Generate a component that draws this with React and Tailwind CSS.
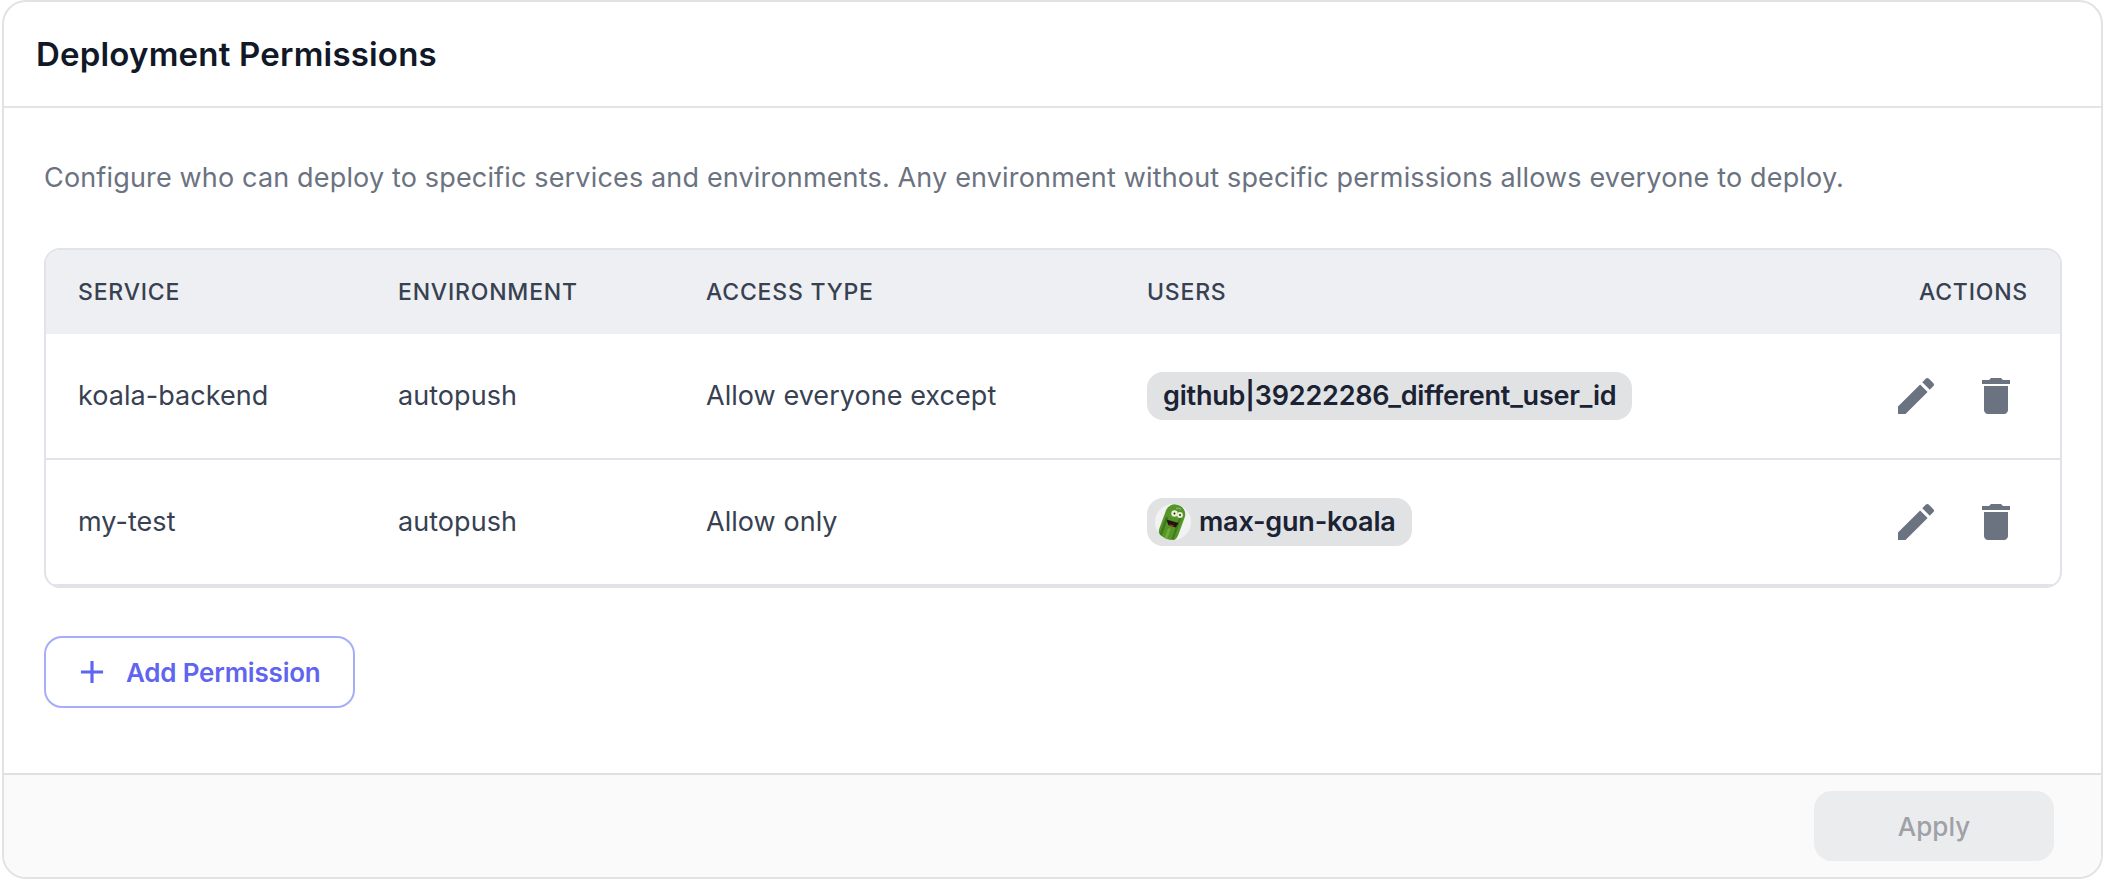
import React from "react";

const EditIcon = () => (
  <svg viewBox="0 0 24 24" className="w-12 h-12 fill-[#6b7280] shrink-0">
    <path d="M3 17.25V21h3.75L17.81 9.94l-3.75-3.75L3 17.25zM20.71 7.04c.39-.39.39-1.02 0-1.41l-2.34-2.34c-.39-.39-1.02-.39-1.41 0l-1.83 1.83 3.75 3.75 1.83-1.83z" />
  </svg>
);
const DeleteIcon = () => (
  <svg viewBox="0 0 24 24" className="w-12 h-12 fill-[#6b7280] shrink-0">
    <path d="M6 19c0 1.1.9 2 2 2h8c1.1 0 2-.9 2-2V7H6v12zM19 4h-3.5l-1-1h-5l-1 1H5v2h14V4z" />
  </svg>
);
const Pickle = () => (
  <svg viewBox="0 0 36 36" className="w-9 h-9 shrink-0">
    <defs>
      <clipPath id="av">
        <circle cx="18" cy="18" r="18" />
      </clipPath>
    </defs>
    <circle cx="18" cy="18" r="18" fill="#f2f2f2" />
    <g clipPath="url(#av)">
      <g transform="rotate(20 17 19)">
        <rect x="7" y="0" width="20" height="38" rx="9.5" fill="#55952a" />
        <path d="M10.5 15v22" stroke="#3f7a1a" strokeWidth="2.4" fill="none" />
        <path d="M23 6v28" stroke="#3f7a1a" strokeWidth="2" fill="none" />
        <path d="M16.5 25v11" stroke="#6fae35" strokeWidth="2.6" fill="none" />
      </g>
      <circle cx="19.5" cy="9.5" r="3.2" fill="#e8f2cf" />
      <circle cx="25" cy="11" r="2.9" fill="#e8f2cf" />
      <circle cx="19.5" cy="9.5" r=".9" fill="#1a1a1a" />
      <circle cx="25" cy="11" r=".9" fill="#1a1a1a" />
      <path d="M21 4.5c2-.8 4-.2 5 1.2" stroke="#9fb8a8" strokeWidth="1" fill="none" />
      <path d="M11.5 15.5l12 3.5-2.8 4.6-7.4-2.6z" fill="#1d1512" />
      <path d="M14.5 20l4.6 1.4-.9 1.4-3.4-1.1z" fill="#a3262a" />
    </g>
  </svg>
);

const cols = "grid grid-cols-[320px_308px_441px_1fr] items-center";

const rows = [
  { service: "koala-backend", access: "Allow everyone except", user: "github|39222286_different_user_id" },
  { service: "my-test", access: "Allow only", user: "max-gun-koala", avatar: true },
];

export default function App() {
  return (
    <div className="font-['Inter','Liberation_Sans',sans-serif] bg-white">
      <div className="ml-[2px] w-[2101px] h-[879px] flex flex-col border-2 border-[#e2e2e2] rounded-[24px] overflow-hidden bg-white">
        <div className="h-[104px] shrink-0 border-b-2 border-[#e4e4e6] box-content flex items-center pl-8 pt-[2px] -mt-[2px]">
          <h1 className="text-[33px] leading-10 font-semibold tracking-[0.2px] text-[#111827]">Deployment Permissions</h1>
        </div>
        <div className="flex-1 pl-10 pr-[39px] pt-[50px]">
          <p className="text-[27px] leading-10 text-[#6b7280] tracking-[0.16px]">
            Configure who can deploy to specific services and environments. Any environment without specific permissions allows everyone to deploy.
          </p>
          <div className="mt-[50px] border-2 border-[#e2e3e8] rounded-2xl overflow-hidden">
            <div className={`${cols} h-[84px] bg-[#eeeff2] pl-8 pr-8 text-[23px] font-medium tracking-[0.8px] text-[#374151]`}>
              <div>SERVICE</div>
              <div>ENVIRONMENT</div>
              <div>ACCESS TYPE</div>
              <div className="flex justify-between"><span>USERS</span><span>ACTIONS</span></div>
            </div>
            {rows.map((r) => (
              <div key={r.service} className={`${cols} h-[126px] border-b-2 border-[#e2e3e8] pl-8 text-[27px] tracking-[0.05px] text-[#374151]`}>
                <div>{r.service}</div>
                <div>autopush</div>
                <div>{r.access}</div>
                <div className="flex items-center justify-between pr-10">
                  {r.avatar ? (
                    <span className="h-12 rounded-[16px] bg-[#e1e2e4] pl-2 pr-4 flex items-center gap-2 text-[27px] tracking-[-0.2px] font-semibold text-[#1a2233]">
                      <Pickle />
                      {r.user}
                    </span>
                  ) : (
                    <span className="h-12 rounded-[16px] bg-[#e1e2e4] px-4 flex items-center text-[27px] tracking-[-0.2px] font-semibold text-[#1a2233]">
                      {r.user}
                    </span>
                  )}
                  <span className="flex gap-8">
                    <EditIcon />
                    <DeleteIcon />
                  </span>
                </div>
              </div>
            ))}
          </div>
          <button className="mt-12 w-[311px] h-[72px] border-2 border-[#a7adfa] rounded-[18px] pl-[27px] flex items-center gap-[15px] text-[26px] font-semibold tracking-[-0.2px] text-[#5f65ee]">
            <svg viewBox="0 0 24 24" className="w-[38px] h-[38px] fill-[#5f65ee] shrink-0">
              <path d="M19 13h-6v6h-2v-6H5v-2h6V5h2v6h6v2z" />
            </svg>
            Add Permission
          </button>
        </div>
        <div className="h-[104px] shrink-0 border-t-2 border-[#e0e0e0] bg-[#fafafa] flex items-center justify-end pr-[47px]">
          <button className="w-[240px] h-[70px] rounded-[18px] bg-[#ebecee] text-[26px] font-medium text-[#9fa1a7]">Apply</button>
        </div>
      </div>
    </div>
  );
}
